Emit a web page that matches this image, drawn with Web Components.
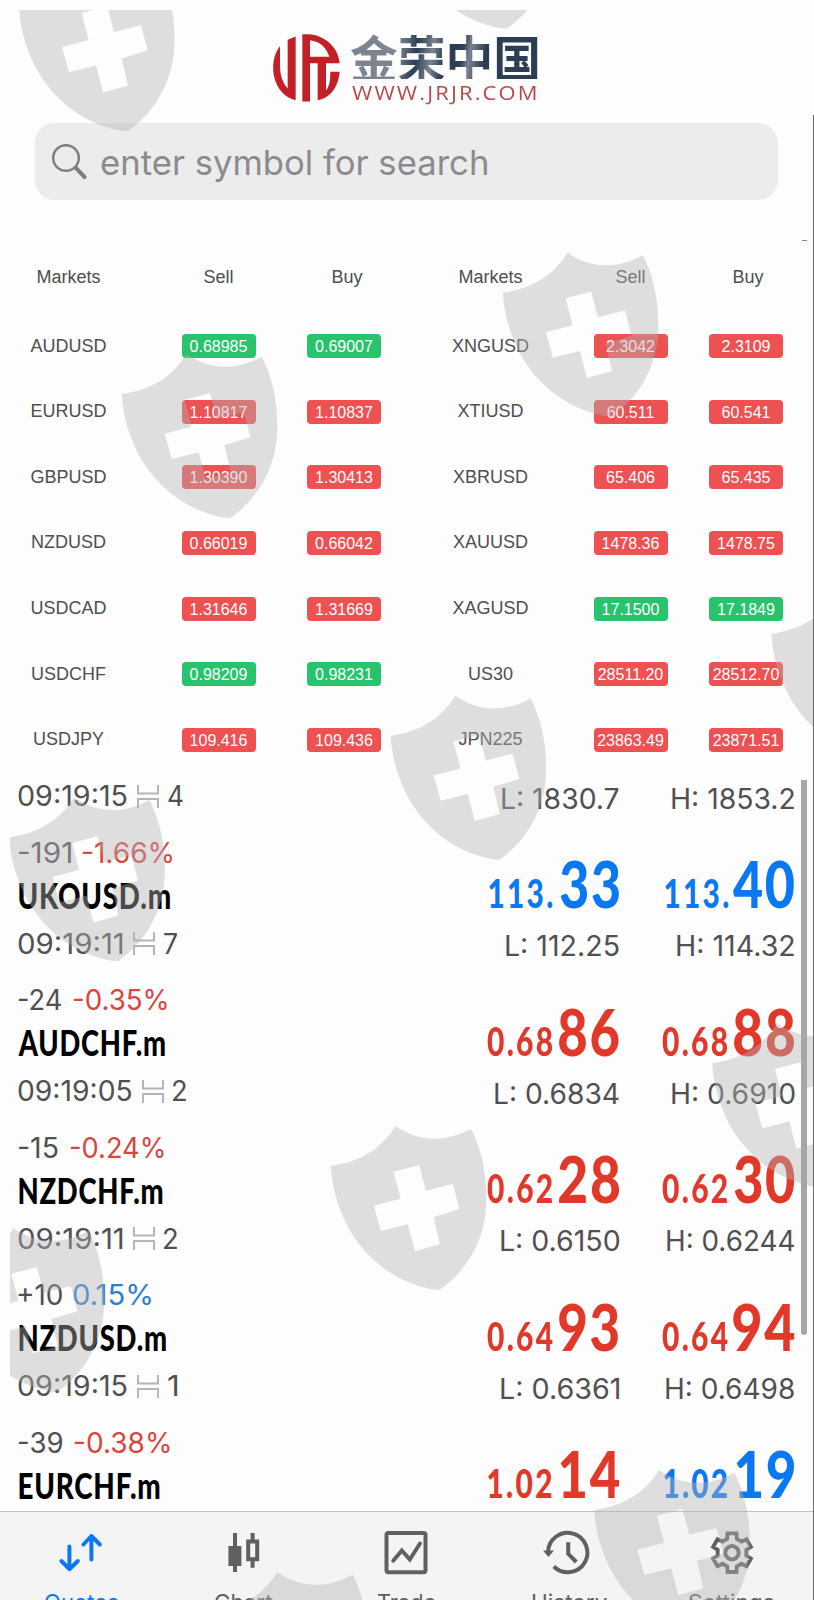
<!DOCTYPE html>
<html lang="en">
<head>
<meta charset="utf-8">
<title>Quotes</title>
<style>
  body { margin: 0; background: #fdfdfd; }
</style>
</head>
<body>
<quotes-app></quotes-app>

<script>
const SANS = 'Inter, "Liberation Sans", sans-serif';
const pen = document.createElement("canvas").getContext("2d");

function define(name, html, setup) {
  const template = document.createElement("template");
  template.innerHTML = html;

  customElements.define(name, class extends HTMLElement {
    constructor() {
      super();
      this.attachShadow({ mode: "open" });
      this.shadowRoot.appendChild(template.content.cloneNode(true));
    }

    connectedCallback() {
      if (setup) setup(this, this.shadowRoot);
    }
  });
}

// text condensed or stretched so that its ink is exactly `w` pixels wide
define("fit-text", `
<style>
:host { display: block; flex: none; }
span { display: block; white-space: pre; transform-origin: 0 50%; background: var(--ink, none); -webkit-background-clip: text; background-clip: text; }
</style>
<span></span>
`, (host, root) => {
  const w = parseFloat(host.getAttribute("w"));
  const span = root.querySelector("span");
  span.textContent = host.getAttribute("text");
  host.style.width = w + "px";
  const cs = getComputedStyle(host);
  pen.font = `${cs.fontWeight} ${cs.fontSize} ${cs.fontFamily}`;
  pen.letterSpacing = cs.letterSpacing === "normal" ? "0px" : cs.letterSpacing;
  const m = pen.measureText(span.textContent);
  const scale = w / (m.actualBoundingBoxLeft + m.actualBoundingBoxRight);
  span.style.width = m.width + "px";
  span.style.transform = `translateX(${m.actualBoundingBoxLeft * scale}px) scaleX(${scale})`;
});

define("brand-logo", `
<style>
:host { display: flex; height: 123px; padding: 34px 0 0 273px; box-sizing: border-box; }
svg { display: block; width: 67px; height: 68px; margin-right: 11px; }
.words { display: flex; flex-direction: column; }
.name {
  font: 700 50px "Noto Sans CJK SC", sans-serif; line-height: 45px; color: transparent;
  --ink: linear-gradient(100deg, #7b8490 0 24%, #6f7985 27%, #2b3e53 35%, #7b8490 43%, #2b3e53 49%, #2b3e53 58%, #7b8490 62%, #2b3e53 70%);
}
.site { font: 400 20.5px "Open Sans", sans-serif; line-height: 26px; letter-spacing: 2px; color: #b8484a; margin: 0 0 0 1px; }
</style>
<svg viewBox="16 19 201 203" fill="#c22026">
  <path d="M37 55C20 75 12 110 19 145C27 182 52 210 84 217V26L60 36V182C45 165 37 142 37 112Z"/>
  <path fill-rule="evenodd" d="M104 19H122C172 21 213 60 216 106H175V188C185 177 188 160 188 132H216C212 180 186 212 150 217V106H127V221H104ZM127 37V87H185C178 60 156 40 127 37Z"/>
</svg>
<div class="words">
  <fit-text class="name" w="187" text="金荣中国"></fit-text>
  <fit-text class="site" w="184" text="WWW.JRJR.COM"></fit-text>
</div>
`);

define("search-box", `
<style>
:host {
  display: flex; align-items: center; gap: 13.5px; box-sizing: border-box;
  width: 743px; height: 77px; margin-left: 35px; padding-left: 17px;
  border-radius: 20px; background: #ececed; color: #8b8b8d; font: 400 34.5px ${SANS};
}
svg { display: block; width: 35px; height: 36px; margin-top: 1px; }
fit-text { margin-top: 2px; }
</style>
<svg viewBox="0 0 35 36" fill="none" stroke="#7f7f81">
  <circle cx="14" cy="14" r="12.8" stroke-width="2.5"/>
  <path d="M23.5 23.5L32.5 33" stroke-width="4" stroke-linecap="round"/>
</svg>
<fit-text w="386" text="enter symbol for search"></fit-text>
`);

define("price-pill", `
<style>
:host {
  display: block; width: 74px; height: 24px; border-radius: 4px; text-align: center;
  background: #ee5152; color: #fff; font: 16px/25px "Liberation Sans", Arial, sans-serif;
}
:host([up]) { background: #29c36d; }
</style>
<slot></slot>
`);

const markets = [
  ["AUDUSD", "0.68985", "0.69007", 1, "XNGUSD", "2.3042", "2.3109", 0],
  ["EURUSD", "1.10817", "1.10837", 0, "XTIUSD", "60.511", "60.541", 0],
  ["GBPUSD", "1.30390", "1.30413", 0, "XBRUSD", "65.406", "65.435", 0],
  ["NZDUSD", "0.66019", "0.66042", 0, "XAUUSD", "1478.36", "1478.75", 0],
  ["USDCAD", "1.31646", "1.31669", 0, "XAGUSD", "17.1500", "17.1849", 1],
  ["USDCHF", "0.98209", "0.98231", 1, "US30", "28511.20", "28512.70", 0],
  ["USDJPY", "109.416", "109.436", 0, "JPN225", "23863.49", "23871.51", 0]
];

define("market-table", `
<style>
:host { display: block; padding-top: 41.4px; height: 560px; box-sizing: border-box; font: 18px "Liberation Sans", Arial, sans-serif; color: #4e4e4e; }
.row {
  display: grid; grid-template-columns: 137px 163px 88px 205px 75px 40px 76px;
  height: 65.55px; align-items: center; justify-items: center;
}
.row > :nth-child(6) { grid-column: 7; }
.head { height: 72.2px; }
</style>
<div class="row head">
  <span>Markets</span><span>Sell</span><span style="padding-left:6px">Buy</span>
  <span>Markets</span><span>Sell</span><span style="padding-left:4px">Buy</span>
</div>
`, (host, root) => {
  markets.forEach(([a, s1, b1, up1, b, s2, b2, up2]) => {
    const row = document.createElement("div");
    row.className = "row";
    const pill = (v, up) => `<price-pill${up ? " up" : ""}>${v}</price-pill>`;
    row.innerHTML = `<span>${a}</span>${pill(s1, up1)}${pill(b1, up1)}<span>${b}</span>${pill(s2, up2)}${pill(b2, up2)}`;
    root.appendChild(row);
  });
});

define("big-price", `
<style>
:host { display: flex; justify-content: flex-end; align-items: baseline; height: 54px; color: #e2382a; }
:host([tone="up"]) { color: #0a78f2; }
fit-text { line-height: 54px; font-family: Lato, sans-serif; font-weight: 900; }
.small { font-size: 39px; letter-spacing: 3px; }
.large { font-size: 64px; letter-spacing: 2px; }
</style>
`, (host, root) => {
  const [small, sw, large, lw, gap] = host.getAttribute("parts").split(" ");
  root.innerHTML += `<fit-text class="small" w="${sw}" text="${small}" style="margin-right:${gap}px"></fit-text>` +
    `<fit-text class="large" w="${lw}" text="${large}"></fit-text>`;
});

define("quote-row", `
<style>
:host { display: flex; height: 147.5px; box-sizing: border-box; font: 400 28px ${SANS}; color: #505052; }
.left { flex: 1; padding-left: 18.2px; display: flex; flex-direction: column; align-items: flex-start; }
.change { display: flex; gap: 11.5px; line-height: 42px; height: 40px; }
.pct { color: #d8463e; }
.pct.up { color: #2c7fd2; }
.name { font: 900 36px Lato, sans-serif; line-height: 46px; height: 46px; color: #000; letter-spacing: 1px; }
.meta { display: flex; align-items: center; height: 52px; line-height: 52px; }
svg { display: block; width: 22px; height: 23px; margin: 0 9px 0 10.3px; }
.side { width: 175.5px; display: flex; flex-direction: column; align-items: flex-end; padding-top: 25.5px; }
.side.last { margin-right: 19.7px; }
.lh { line-height: 70.5px; }
:host([tail]) { height: 71.7px; }
:host([tail]) .meta { height: 73px; line-height: 73px; }
:host([tail]) .side { padding-top: 4px; }
</style>
<div class="left"></div>
<div class="side"></div>
<div class="side last"></div>
`, (host, root) => {
  const d = host.data;
  const fit = ([text, w], cls, style = "") => `<fit-text class="${cls}" w="${w}" text="${text}" style="${style}"></fit-text>`;
  const spread = `<svg viewBox="0 0 22 23" fill="none" stroke="#b4b4bc" stroke-width="2"><path d="M1 0V8.5H21V0M1 23V14H21V23"/></svg>`;
  const [left, sell, buy] = root.querySelectorAll("div");
  if (d.name) {
    left.innerHTML = `<div class="change">${fit(d.points, "")}${fit(d.pct, d.up ? "pct up" : "pct")}</div>` +
      fit(d.name, "name", `margin-left:${d.nudge}px`);
    sell.innerHTML = `<big-price parts="${d.sell}" tone="${d.tones[0]}"></big-price>`;
    buy.innerHTML = `<big-price parts="${d.buy}" tone="${d.tones[1]}"></big-price>`;
  }
  if (d.time) {
    left.innerHTML += `<div class="meta">${fit(d.time, "")}${spread}${fit(d.spread, "")}</div>`;
    sell.innerHTML += fit(d.low, "lh");
    buy.innerHTML += fit(d.high, "lh");
  }
});

const quotes = [
  { time: ["09:19:15", 109], spread: ["4", 15], low: ["L: 1830.7", 116.7], high: ["H: 1853.2", 122.7] },
  { points: ["-191", 52.7], pct: ["-1.66%", 90.7], name: ["UKOUSD.m", 151], nudge: 0.5,
    sell: "113. 63.3 33 59.3 7", buy: "113. 63.3 40 61 5.5", tones: ["up", "up"],
    time: ["09:19:11", 104.3], spread: ["7", 13.3], low: ["L: 112.25", 113], high: ["H: 114.32", 117.7] },
  { points: ["-24", 43.3], pct: ["-0.35%", 94.3], name: ["AUDCHF.m", 147], nudge: -0.3,
    sell: "0.68 65.7 86 60 6.3", buy: "0.68 65.7 88 60 6.5", tones: ["down", "down"],
    time: ["09:19:05", 113.7], spread: ["2", 13.7], low: ["L: 0.6834", 124], high: ["H: 0.6910", 122.3] },
  { points: ["-15", 40], pct: ["-0.24%", 94], name: ["NZDCHF.m", 143.7], nudge: 1,
    sell: "0.62 65 28 60 7", buy: "0.62 65 30 60.5 6.7", tones: ["down", "down"],
    time: ["09:19:11", 104.3], spread: ["2", 13.7], low: ["L: 0.6150", 118], high: ["H: 0.6244", 127.3] },
  { points: ["+10", 43.8], pct: ["0.15%", 78.3], up: true, name: ["NZDUSD.m", 147], nudge: 1,
    sell: "0.64 65.7 93 59.5 6.5", buy: "0.64 65.7 94 61.7 5", tones: ["down", "down"],
    time: ["09:19:15", 109], spread: ["1", 9], low: ["L: 0.6361", 118], high: ["H: 0.6498", 128] },
  { points: ["-39", 44.3], pct: ["-0.38%", 96], name: ["EURCHF.m", 140.7], nudge: 1,
    sell: "1.02 63.3 14 59.3 8", buy: "1.02 62.7 19 58.8 8.5", tones: ["down", "up"] }
];

define("quote-list", `
<style>
:host { display: block; height: 751px; overflow: hidden; }
</style>
`, (host, root) => {
  quotes.forEach((quote) => {
    const row = document.createElement("quote-row");
    row.data = quote;
    if (!quote.name) row.setAttribute("tail", "");
    root.appendChild(row);
  });
});

// six-toothed cog centred in the icon box
function cog() {
  const points = [];
  for (let i = 0; i < 6; i++) {
    [[-19, 14.6], [-13, 19.8], [13, 19.8], [19, 14.6]].forEach(([da, r]) => {
      const a = (-90 + i * 60 + da) * Math.PI / 180;
      points.push((30 + r * Math.cos(a)).toFixed(1) + " " + (30.7 + r * Math.sin(a)).toFixed(1));
    });
  }
  return `<path stroke-width="3.8" d="M${points.join("L")}Z"/><circle cx="30" cy="30.7" r="6.7"/>`;
}

const icons = {
  quotes: `<path stroke-linecap="round" stroke-linejoin="round" d="M18.4 24.5V47M10.4 39L18.4 47.2L26.8 39M40.4 37.5V14M32.4 22.5L40.4 14L48.8 22.5"/>`,
  chart: `<path fill="currentColor" stroke="none" d="M19 11h4v13h4.4v20H23v6h-4v-6h-4.6V24H19zM36.6 11h4v7h-4zM36.6 39h4v6.7h-4z"/><path d="M34.2 19.6h9v17.6h-9z"/>`,
  trade: `<rect x="10.5" y="11" width="39" height="39.3" rx="2"/><path stroke-linecap="round" stroke-linejoin="miter" d="M17.2 38.7L25.8 28.5L33.8 37.5L44 21.5"/>`,
  history: `<path d="M9 30.2A19.7 19.7 0 1 1 14.8 44.5M29.2 20.3V31.8L37.3 40"/><path fill="currentColor" stroke="none" d="M4 28.5L15 28.5L9.5 35Z"/>`,
  settings: cog()
};

define("tab-item", `
<style>
:host { display: flex; flex: 1; flex-direction: column; align-items: center; padding-top: 10px; color: #606062; font: 400 22px/40px ${SANS}; }
:host([active]) { color: #0a78f2; }
svg { display: block; width: 60px; height: 60px; flex: none; }
</style>
<svg viewBox="0 0 60 60" fill="none" stroke="currentColor" stroke-width="4"></svg>
`, (host, root) => {
  root.querySelector("svg").innerHTML = icons[host.getAttribute("icon")];
  root.innerHTML += `<fit-text w="${host.getAttribute("w")}" text="${host.getAttribute("label")}"></fit-text>`;
});

define("tab-bar", `
<style>
:host { display: flex; height: 88px; border-top: 1px solid #c2c2c3; background: #f4f4f4; padding-right: 1px; overflow: hidden; }
</style>
<tab-item icon="quotes" label="Quotes" w="73.3" active></tab-item>
<tab-item icon="chart" label="Chart" w="57.3"></tab-item>
<tab-item icon="trade" label="Trade" w="57.3"></tab-item>
<tab-item icon="history" label="History" w="75"></tab-item>
<tab-item icon="settings" label="Settings" w="85"></tab-item>
`);

// repeated shield stamp, laid over the whole page
define("shield-overlay", `
<style>
:host { position: absolute; inset: 0; pointer-events: none; }
svg { display: block; }
</style>
<svg width="814" height="1600">
  <defs>
    <clipPath id="edge"><rect x="10" y="10" width="804" height="1590"/></clipPath>
    <path id="shield" fill-rule="evenodd" d="M0 0C28 -4 50 -16 64.7 -40C87 -24 114 -23 140 -37.3C152 -14 157 14 155 44C152 78 134 106 109.3 123.5C103 124.5 95 122 88 120C56 110 30 87 15 57C6 38 1 20 0 0ZM62.7 5.7L69.7 32.7L43 39.7L50 65L77 58.3L84 85.3L109 78.3L102.7 51L128.7 43.3L122 18L95 24.7L88.3 -1Z"/>
  </defs>
  <g clip-path="url(#edge)" fill="#b2b2b2" fill-opacity=".42"></g>
</svg>
`, (host, root) => {
  root.querySelector("g").innerHTML = [
    [19, 7.2], [398.2, -95.3], [121.8, 394], [502.9, 292.6], [771.5, 634], [390.7, 735.7],
    [9.4, 837.3], [330.9, 1166], [712.3, 1063.3], [-51.3, 1268], [594.3, 1510], [212.7, 1612]
  ].map(([x, y]) => `<use href="#shield" x="${x}" y="${y}"/>`).join("");
});

define("quotes-app", `
<style>
:host { display: block; position: relative; width: 814px; height: 1600px; overflow: hidden; }
.scroll, .edge, .mark { position: absolute; }
.scroll { left: 801px; top: 780px; width: 6px; height: 555px; border-radius: 0 0 3px 3px; background: #a6a6a6; }
.edge { left: 813px; top: 115px; width: 1px; bottom: 0; background: #68686a; }
.mark { left: 802px; top: 240px; width: 5px; height: 1px; background: #8a8a8a; }
</style>
<brand-logo></brand-logo>
<search-box></search-box>
<market-table></market-table>
<quote-list></quote-list>
<tab-bar></tab-bar>
<shield-overlay></shield-overlay>
<div class="scroll"></div>
<div class="mark"></div>
<div class="edge"></div>
`);
</script>
</body>
</html>
